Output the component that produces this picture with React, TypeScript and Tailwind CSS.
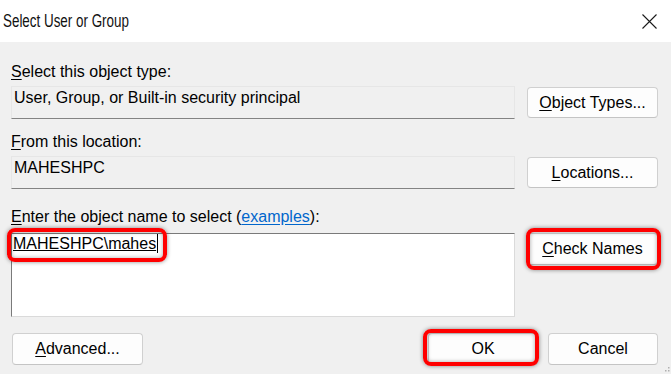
import React from "react";

const font = { fontFamily: '"Liberation Sans", Arial, sans-serif' };

function Btn({ children, className = "" }: { children: React.ReactNode; className?: string }) {
  return (
    <div
      className={`flex items-center justify-center bg-[#fdfdfd] border border-[#d0d0d0] border-b-[#c4c4c4] rounded-[4px] text-[16px] leading-[20px] text-black ${className}`}
    >
      {children}
    </div>
  );
}

function RedBox({ className }: { className: string }) {
  return (
    <div
      className={`absolute border-[4px] border-[#ff0000] rounded-[8px] shadow-[0_0_4px_rgba(0,0,0,0.45),inset_0_0_4px_rgba(0,0,0,0.35)] pointer-events-none ${className}`}
    />
  );
}

export default function App() {
  return (
    <div className="w-[671px] h-[374px] overflow-hidden bg-[#f0f0f0] relative text-black" style={font}>
      {/* Title bar */}
      <div className="h-[42px] bg-white flex items-center justify-between">
        <span className="inline-block pl-[4px] text-[18px] leading-[20px] origin-left scale-x-[0.745] whitespace-nowrap text-[#111]">
          Select User or Group
        </span>
        <svg width="15" height="15" viewBox="0 0 15 15" className="mr-[14px]">
          <path d="M0.5 0.5 L14.5 14.5 M14.5 0.5 L0.5 14.5" stroke="#1a1a1a" strokeWidth="1.1" fill="none" />
        </svg>
      </div>

      {/* Body */}
      <div className="pl-[11px] pr-[13px] pt-[20px] text-[16px] leading-[20px]">
        <div>
          <span className="underline underline-offset-2">S</span>elect this object type:
        </div>
        <div className="mt-[4px] flex items-start gap-[12px]">
          <div className="w-[504px] h-[33px] border border-[#e6e6e6] border-b-[#838383] pl-[2px] pt-[1px] bg-[#f0f0f0]">
            User, Group, or Built-in security principal
          </div>
          <Btn className="w-[131px] h-[31px] mt-[1px]">
            <span>
              <span className="underline underline-offset-2">O</span>bject Types...
            </span>
          </Btn>
        </div>

        <div className="mt-[13px]">
          <span className="underline underline-offset-2">F</span>rom this location:
        </div>
        <div className="mt-[4px] flex items-start gap-[12px]">
          <div className="w-[504px] h-[33px] border border-[#e6e6e6] border-b-[#838383] pl-[2px] pt-[1px] bg-[#f0f0f0]">
            MAHESHPC
          </div>
          <Btn className="w-[131px] h-[31px] mt-[1px]">
            <span>
              <span className="underline underline-offset-2">L</span>ocations...
            </span>
          </Btn>
        </div>

        <div className="mt-[18px]">
          <span className="underline underline-offset-2">E</span>nter the object name to select (
          <span className="text-[#0066cc] underline underline-offset-2">examples</span>):
        </div>
        <div className="mt-[6px] flex items-start gap-[12px]">
          <div className="relative w-[504px] h-[84px] bg-white border border-[#dadada] border-t-[#7a7a7a] border-l-[#7a7a7a] pl-[1px]">
            <span className="underline underline-offset-[1px]">MAHESHPC\mahes</span>
            <span className="inline-block w-[1px] h-[19px] bg-black align-[-4px] ml-[1px]" />
            <RedBox className="left-[-5px] top-[-6px] w-[160px] h-[34px]" />
          </div>
          <div className="relative">
            <Btn className="w-[131px] h-[32px]">
              <span>
                <span className="underline underline-offset-2">C</span>heck Names
              </span>
            </Btn>
            <RedBox className="left-[-1px] top-[-5px] w-[135px] h-[42px]" />
          </div>
        </div>

        <div className="mt-[16px] flex items-center">
          <Btn className="w-[131px] h-[32px] ml-[1px]">
            <span>
              <span className="underline underline-offset-2">A</span>dvanced...
            </span>
          </Btn>
          <div className="flex-1" />
          <div className="relative">
            <Btn className="w-[110px] h-[32px]">OK</Btn>
            <RedBox className="left-[-5px] top-[-4px] w-[116px] h-[37px]" />
          </div>
          <Btn className="w-[110px] h-[32px] ml-[10px]">Cancel</Btn>
        </div>
      </div>

      {/* size grip */}
      <svg width="8" height="8" viewBox="0 0 8 8" className="absolute right-[1px] bottom-[1px]">
        <rect x="6" y="2" width="1.5" height="1.5" fill="#b0b0b0" />
        <rect x="3" y="5" width="1.5" height="1.5" fill="#b0b0b0" />
        <rect x="6" y="5" width="1.5" height="1.5" fill="#b0b0b0" />
      </svg>
    </div>
  );
}
